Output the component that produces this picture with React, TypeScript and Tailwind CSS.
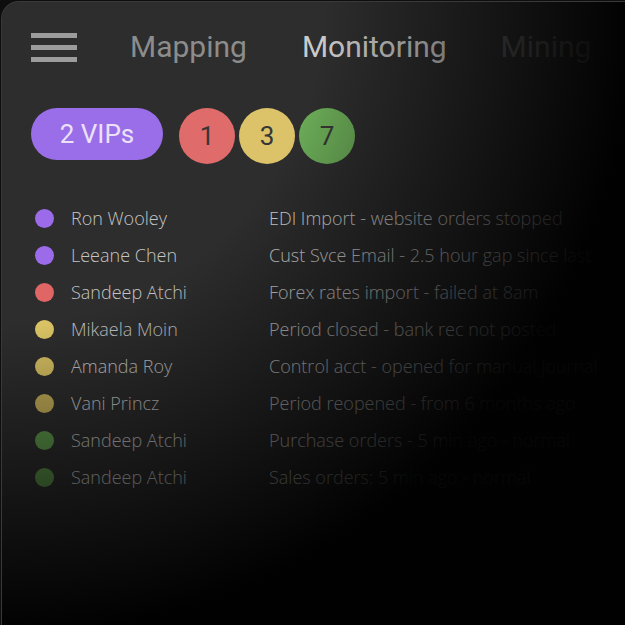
const rows = [
  { dot: "bg-[#9b6bea]", name: "Ron Wooley", msg: "EDI Import - website orders stopped" },
  { dot: "bg-[#9b6bea]", name: "Leeane Chen", msg: "Cust Svce Email - 2.5 hour gap since last" },
  { dot: "bg-[#e06666]", name: "Sandeep Atchi", msg: "Forex rates import - failed at 8am" },
  { dot: "bg-[#dcc565]", name: "Mikaela Moin", msg: "Period closed - bank rec not posted" },
  { dot: "bg-[#d6bf62]", name: "Amanda Roy", msg: "Control acct - opened for manual journal" },
  { dot: "bg-[#c4ae58]", name: "Vani Princz", msg: "Period reopened - from 6 months ago" },
  { dot: "bg-[#5f9a4c]", name: "Sandeep Atchi", msg: "Purchase orders - 5 min ago - normal" },
  { dot: "bg-[#5a9048]", name: "Sandeep Atchi", msg: "Sales orders: 5 min ago - normal" },
];

export default function App() {
  return (
    <div className="w-[625px] h-[625px] bg-[#0e0e0e] pt-px pl-px overflow-hidden">
      <div className="relative w-[640px] h-[640px] rounded-tl-[18px] border-t border-l border-[#393939] bg-[#2d2d2d] overflow-hidden">
        <div className="pl-[29px] pt-[19px]">
          {/* header */}
          <div className="flex items-center h-[52px]">
            <div className="flex flex-col gap-[7px] w-[46px]">
              <span className="block h-[5px] bg-[#9c9c9c]" />
              <span className="block h-[5px] bg-[#9c9c9c]" />
              <span className="block h-[5px] bg-[#9c9c9c]" />
            </div>
            <nav className="flex items-center font-['Roboto',sans-serif] text-[30px] leading-none">
              <span className="ml-[53px] text-[#8c8c8c]">Mapping</span>
              <span className="ml-[55px] text-[#cacaca]">Monitoring</span>
              <span className="ml-[54px] text-[#5a5a5a]">Mining</span>
            </nav>
          </div>

          {/* badges */}
          <div className="flex items-start mt-[35px] font-['Roboto',sans-serif]">
            <div className="w-[132px] h-[52px] rounded-full bg-[#9a6ee8] flex items-center justify-center text-[26px] text-[#ebe2f8]">
              2 VIPs
            </div>
            <div className="ml-[16px] flex gap-[4px]">
              <div className="w-[56px] h-[56px] rounded-full bg-[#e06b6b] flex items-center justify-center text-[26px] text-[#363636]">1</div>
              <div className="w-[56px] h-[56px] rounded-full bg-[#dcc36a] flex items-center justify-center text-[26px] text-[#363636]">3</div>
              <div className="w-[56px] h-[56px] rounded-full bg-[#6bab57] flex items-center justify-center text-[26px] text-[#363636]">7</div>
            </div>
          </div>

          {/* alerts */}
          <ul className="mt-[36px] font-['Open_Sans',sans-serif] font-light text-[18px]">
            {rows.map((r, i) => (
              <li key={i} className="flex items-center h-[37px] whitespace-nowrap">
                <span className={`ml-[4px] w-[19px] h-[19px] rounded-full shrink-0 ${r.dot}`} />
                <span className="ml-[17px] w-[198px] text-[#c4c4c4]">{r.name}</span>
                <span className="text-[#d2d2d2]">{r.msg}</span>
              </li>
            ))}
          </ul>
        </div>

        <div className="absolute inset-0 pointer-events-none bg-[radial-gradient(circle_at_0_0,transparent_320px,rgba(0,0,0,0.97)_630px)]" />
      </div>
    </div>
  );
}
